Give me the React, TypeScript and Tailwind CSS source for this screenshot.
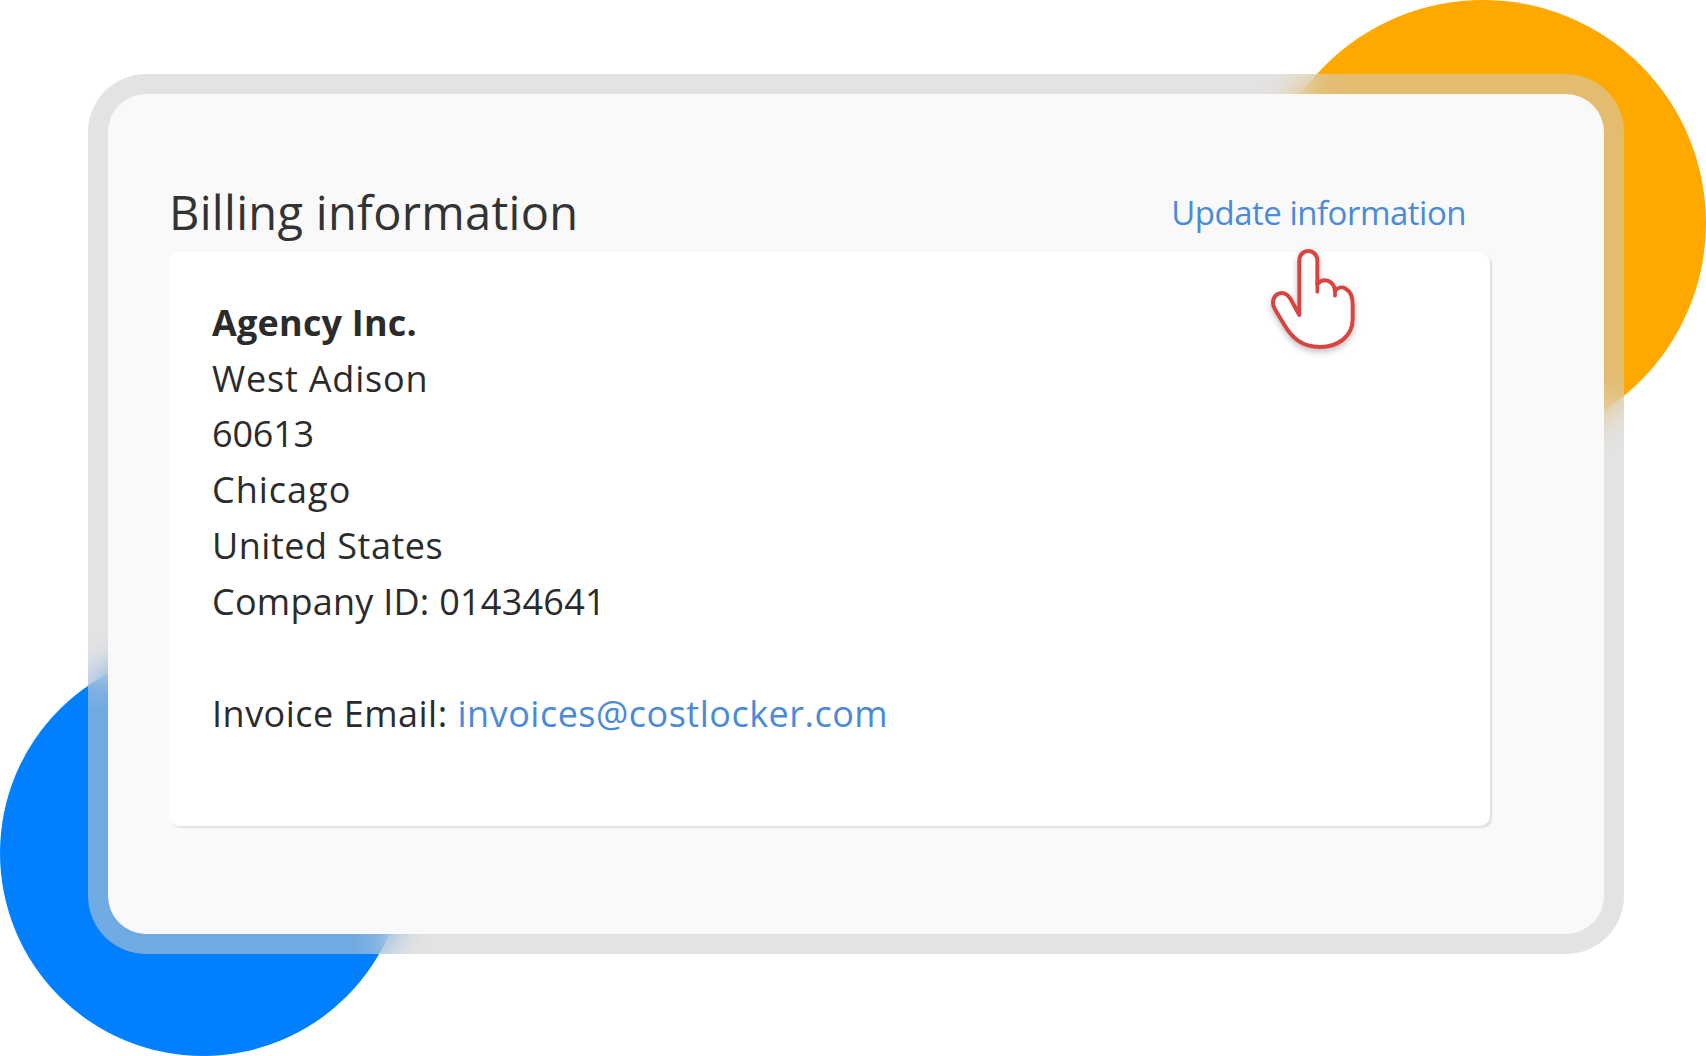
const FONT = "font-['Open_Sans','Lato',sans-serif]"

function HandCursor() {
  return (
    <svg viewBox="0 0 360 360" className="absolute left-[1260px] top-[241px] h-[120px] w-[120px] drop-shadow-[0_3px_3px_rgba(0,0,0,0.25)]" fill="none">
      <path
        d="M118 222 L118 60 C118 20 172 20 172 60 L172 130 C190 108 222 118 225 150 C240 128 278 140 278 190 L278 235 C278 285 235 318 180 318 C125 318 95 290 72 250 L44 203 C24 165 70 135 92 175 Z"
        fill="#fff"
        stroke="#d8443f"
        strokeWidth="12"
        strokeLinejoin="round"
      />
      <path d="M172 125 L172 152 M225 145 L225 164" stroke="#d8443f" strokeWidth="11" strokeLinecap="round" />
    </svg>
  )
}

export default function App() {
  return (
    <div className={`relative h-[1056px] w-[1706px] overflow-hidden bg-white pl-[88px] pt-[74px] ${FONT}`}>
      {/* decorative circles behind the frame */}
      <div className="absolute left-[1260px] top-0 h-[446px] w-[446px] rounded-full bg-[#ffa900]" />
      <div className="absolute bottom-0 left-0 h-[406px] w-[406px] rounded-full bg-[#0080ff]" />

      <div className="relative h-[880px] w-[1536px] rounded-[58px] bg-[rgba(204,204,204,0.55)] p-5 backdrop-blur-[18px]">
        <div className="h-full rounded-[38px] bg-[#f9f9f9] pl-[61px] pr-[114px] pt-[90px]">
          <div className="flex h-[68px] items-start justify-between pr-[24px]">
            <h1 className="mt-[-4px] text-[47px] font-normal leading-[64px] tracking-[0.3px] text-[#333]">Billing information</h1>
            <a className="mt-[6px] text-[33px] leading-[46px] tracking-[-0.5px] text-[#4a8ad9]">Update information</a>
          </div>
          <div className="h-[574px] rounded-[10px] bg-white pl-[43px] pt-[43px] text-[36px] leading-[55.7px] tracking-[0.5px] text-[#2b2b2b] shadow-[2px_2px_2px_rgba(0,0,0,0.1)]">
            <p className="font-bold tracking-[0.2px]">Agency Inc.</p>
            <p className="tracking-[0.8px]">West Adison</p>
            <p className="tracking-[-0.2px]">60613</p>
            <p className="tracking-[1px]">Chicago</p>
            <p>United States</p>
            <p className="tracking-[0.25px]">Company ID: 01434641</p>
            <p className="mt-[57px]">
              Invoice Email: <a className="text-[#4a8ad9]">invoices@costlocker.com</a>
            </p>
          </div>
        </div>
      </div>

      <HandCursor />
    </div>
  )
}
